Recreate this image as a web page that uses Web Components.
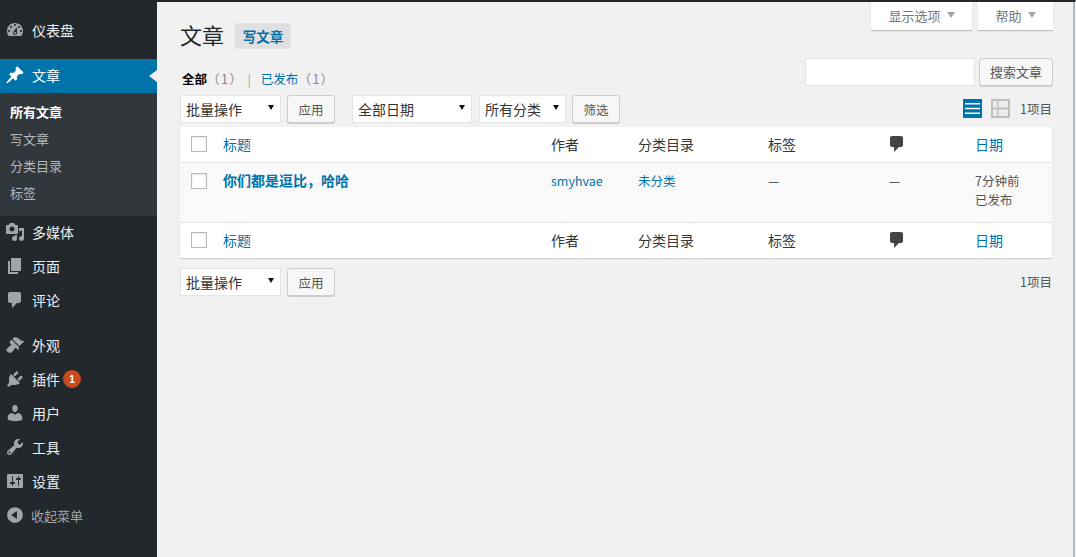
<!DOCTYPE html>
<html lang="zh">
<head>
<meta charset="utf-8">
<title>文章</title>
<style>
html, body { margin: 0; height: 100%; overflow: hidden; }
body {
  background: #f1f1f1;
  color: #444;
  font-family: "Noto Sans CJK SC", "Liberation Sans", sans-serif;
  font-size: 13px;
}
</style>
</head>
<body>
<wp-admin>
  <wp-sidebar slot="sidebar">
    <wp-menu-item icon="dashboard">仪表盘</wp-menu-item>
    <wp-menu-sep></wp-menu-sep>
    <wp-menu-item icon="post" active>文章</wp-menu-item>
    <wp-submenu>
      <a class="current">所有文章</a>
      <a>写文章</a>
      <a>分类目录</a>
      <a>标签</a>
    </wp-submenu>
    <wp-menu-item icon="media">多媒体</wp-menu-item>
    <wp-menu-item icon="page">页面</wp-menu-item>
    <wp-menu-item icon="comments">评论</wp-menu-item>
    <wp-menu-sep></wp-menu-sep>
    <wp-menu-item icon="appearance">外观</wp-menu-item>
    <wp-menu-item icon="plugins" badge="1">插件</wp-menu-item>
    <wp-menu-item icon="users">用户</wp-menu-item>
    <wp-menu-item icon="tools">工具</wp-menu-item>
    <wp-menu-item icon="settings">设置</wp-menu-item>
    <wp-menu-item icon="collapse" muted>收起菜单</wp-menu-item>
  </wp-sidebar>
  <wp-posts-page></wp-posts-page>
</wp-admin>

<script>
// dashicons, 20x20 box
const ICONS = {
  dashboard: 'M3.76 16h12.48c1.1-1.37 1.76-3.11 1.76-5 0-4.42-3.58-8-8-8s-8 3.58-8 8c0 1.89.66 3.63 1.76 5zM10 4c.55 0 1 .45 1 1s-.45 1-1 1-1-.45-1-1 .45-1 1-1zM6 6c.55 0 1 .45 1 1s-.45 1-1 1-1-.45-1-1 .45-1 1-1zm8 0c.55 0 1 .45 1 1s-.45 1-1 1-1-.45-1-1 .45-1 1-1zm-5.37 5.55L12 7v6c0 1.1-.9 2-2 2s-2-.9-2-2c0-.57.24-1.08.63-1.45zM4 10c.55 0 1 .45 1 1s-.45 1-1 1-1-.45-1-1 .45-1 1-1zm12 0c.55 0 1 .45 1 1s-.45 1-1 1-1-.45-1-1 .45-1 1-1zm-5 3c0-.55-.45-1-1-1s-1 .45-1 1 .45 1 1 1 1-.45 1-1z',
  post: 'M10.44 3.02l1.82-1.82 6.36 6.35-1.83 1.82c-1.05-.68-2.48-.57-3.41.36l-.75.75c-.92.93-1.04 2.35-.35 3.41l-1.83 1.82-2.41-2.41-2.8 2.79c-.42.42-3.38 2.71-3.8 2.29s1.86-3.39 2.28-3.81l2.79-2.79L4.1 9.36l1.83-1.82c1.05.69 2.48.57 3.4-.36l.75-.75c.93-.92 1.05-2.35.36-3.41z',
  media: 'M13 11V4c0-.55-.45-1-1-1h-1.67L9 1H5L3.67 3H2c-.55 0-1 .45-1 1v7c0 .55.45 1 1 1h10c.55 0 1-.45 1-1zM7 4.5c1.38 0 2.5 1.12 2.5 2.5S8.38 9.5 7 9.5 4.5 8.38 4.5 7 5.62 4.5 7 4.5zM14 6h5v10.5c0 1.38-1.12 2.5-2.5 2.5S14 17.88 14 16.5s1.12-2.5 2.5-2.5c.17 0 .34.02.5.05V9h-3V6zm-4 8.05V13h2v3.5c0 1.38-1.12 2.5-2.5 2.5S7 17.88 7 16.5 8.12 14 9.5 14c.17 0 .34.02.5.05z',
  page: 'M6 15V2h10v13H6zm-1 1h8v2H3V5h2v11z',
  comments: 'M5 2h9c1.1 0 2 .9 2 2v7c0 1.1-.9 2-2 2h-2l-5 5v-5H5c-1.1 0-2-.9-2-2V4c0-1.1.9-2 2-2z',
  appearance: 'M14.48 11.06L7.41 3.99l1.5-1.5c.5-.56 2.3-.47 3.51.32 1.21.8 1.43 1.28 2.91 2.1 1.18.64 2.45 1.26 4.45.85zm-.71.71L6.7 4.7 4.93 6.47c-.39.39-.39 1.02 0 1.41l1.06 1.06c.39.39.39 1.03 0 1.42-.6.6-1.43 1.11-2.21 1.69-.35.26-.7.53-1.01.84C1.43 13.23.78 15.08 2.53 16.83c1.75 1.75 3.6 1.1 4.94-.24.31-.31.58-.66.84-1.01.58-.78 1.09-1.61 1.69-2.21.39-.39 1.03-.39 1.42 0l1.06 1.06c.39.39 1.02.39 1.41 0z',
  plugins: 'M13.11 4.36L9.87 7.6 8 5.73l3.24-3.24c.35-.34 1.05-.2 1.56.32.52.51.66 1.21.31 1.55zm-8 1.77l.91-1.12 9.01 9.01-1.19.84c-.71.71-2.63 1.16-3.82 1.16H6.14L4.9 17.26c-.59.59-1.54.59-2.12 0-.59-.58-.59-1.53 0-2.12l1.24-1.24v-3.88c0-1.13.4-3.19 1.09-3.89zm7.26 3.97l3.24-3.24c.34-.35 1.04-.21 1.55.31.52.51.66 1.21.31 1.55l-3.24 3.25z',
  users: 'M10 9.25c-2.27 0-2.73-3.44-2.73-3.44C7 4.02 7.82 2 9.97 2c2.16 0 2.98 2.02 2.71 3.81 0 0-.41 3.44-2.68 3.44zm0 2.57L12.72 10c2.39 0 4.52 2.33 4.52 4.53v2.49s-3.65 1.13-7.24 1.13c-3.65 0-7.24-1.13-7.24-1.13v-2.49c0-2.25 1.94-4.48 4.47-4.48z',
  tools: 'M16.68 9.77c-1.34 1.34-3.3 1.67-4.95.99l-5.41 6.52c-.99.99-2.59.99-3.58 0s-.99-2.59 0-3.57l6.52-5.42c-.68-1.65-.35-3.61.99-4.95 1.28-1.28 3.12-1.62 4.72-1.06l-2.89 2.89 2.82 2.82 2.86-2.87c.53 1.58.18 3.39-1.08 4.65zM3.81 16.21c.4.39 1.04.39 1.43 0 .4-.4.4-1.04 0-1.43-.39-.4-1.03-.4-1.43 0-.39.39-.39 1.03 0 1.43z',
  settings: 'M18 16V4c0-.55-.45-1-1-1H3c-.55 0-1 .45-1 1v12c0 .55.45 1 1 1h14c.55 0 1-.45 1-1zM8 11h1c.55 0 1 .45 1 1s-.45 1-1 1H8v1.5c0 .28-.22.5-.5.5s-.5-.22-.5-.5V13H6c-.55 0-1-.45-1-1s.45-1 1-1h1V5.5c0-.28.22-.5.5-.5s.5.22.5.5V11zm5-2h-1c-.55 0-1-.45-1-1s.45-1 1-1h1V5.5c0-.28.22-.5.5-.5s.5.22.5.5V7h1c.55 0 1 .45 1 1s-.45 1-1 1h-1v5.5c0 .28-.22.5-.5.5s-.5-.22-.5-.5V9z',
  collapse: 'M10 2.16c4.33 0 7.84 3.51 7.84 7.84s-3.51 7.84-7.84 7.84S2.16 14.33 2.16 10 5.71 2.16 10 2.16zm2 11.72V6.12L6.18 9.97z'
};

function iconSvg(name, size, color) {
  return `<svg width="${size}" height="${size}" viewBox="0 0 20 20" fill="${color}"><path d="${ICONS[name]}"/></svg>`;
}

function shadow(el, html) {
  el.attachShadow({ mode: 'open' }).innerHTML = html;
}

class WpAdmin extends HTMLElement {
  constructor() {
    super();
    shadow(this, `<style>
      :host { display: flex; height: 557px; box-sizing: border-box; border-top: 2px solid #23282d; border-right: 1px solid #f4f6f8; }
      .content { flex: 1; min-width: 0; display: flex; border-right: 2px solid #a9bccd; }
    </style>
    <slot name="sidebar"></slot>
    <div class="content"><slot></slot></div>`);
  }
}

class WpSidebar extends HTMLElement {
  constructor() {
    super();
    shadow(this, `<style>
      :host { display: block; flex: none; width: 157px; box-sizing: border-box; padding-top: 12px; background: #23282d; }
    </style><slot></slot>`);
  }
}

class WpMenuSep extends HTMLElement {
  constructor() {
    super();
    shadow(this, `<style>:host { display: block; height: 11px; }</style>`);
  }
}

class WpMenuItem extends HTMLElement {
  constructor() {
    super();
    const name = this.getAttribute('icon');
    const active = this.hasAttribute('active');
    const muted = this.hasAttribute('muted');
    const badge = this.getAttribute('badge');
    const color = active ? '#fff' : '#a0a5aa';
    shadow(this, `<style>
      :host { display: flex; align-items: center; position: relative; box-sizing: border-box; height: 34px; padding: 0 0 2px 5px;
        color: ${muted ? '#a0a5aa' : '#eee'}; font-size: ${muted ? 13 : 14}px; background: ${active ? '#0073aa' : 'transparent'}; }
      :host([active]) { color: #fff; }
      svg { display: block; flex: none; margin-right: ${muted ? 6 : 7}px; }
      .badge { display: inline-flex; align-items: center; justify-content: center; width: 18px; height: 18px; margin-left: 3px;
        border-radius: 50%; background: #ca4a1f; color: #fff; font-size: 10px; font-weight: 700; font-family: "Liberation Sans", sans-serif; }
      .arrow { position: absolute; right: 0; top: 11px; border: 6px solid transparent; border-right-color: #f1f1f1; border-left-width: 0; border-right-width: 8px; }
    </style>
    ${iconSvg(name, 20, color)}<slot></slot>
    ${badge ? `<span class="badge">${badge}</span>` : ''}
    ${active ? '<span class="arrow"></span>' : ''}`);
  }
}

class WpSubmenu extends HTMLElement {
  constructor() {
    super();
    shadow(this, `<style>
      :host { display: flex; flex-direction: column; height: 123px; box-sizing: border-box; padding: 5px 0 0 10px; background: #32373c; }
      ::slotted(a) { display: block; height: 27px; line-height: 27px; font-size: 13px; color: #b4b9be; }
      ::slotted(a.current) { color: #fff; font-weight: 700; }
    </style><slot></slot>`);
  }
}

class WpButton extends HTMLElement {
  constructor() {
    super();
    shadow(this, `<style>
      :host { display: inline-flex; align-items: center; justify-content: center; box-sizing: border-box; height: 28px;
        background: #f7f7f7; border: 1px solid #ccc; border-radius: 3px; box-shadow: 0 1px 0 #ccc; color: #555; font-size: 12.5px; }
    </style><slot></slot>`);
  }
}

class WpSelect extends HTMLElement {
  constructor() {
    super();
    const label = this.getAttribute('label');
    shadow(this, `<style>
      :host { display: inline-block; position: relative; box-sizing: border-box; height: 28px; }
      select { appearance: none; -webkit-appearance: none; display: block; box-sizing: border-box; width: 100%; height: 100%; margin: 0;
        padding: 0 0 0 5px; background: #fff; border: 1px solid #e4e4e4; border-radius: 0; font: inherit; font-size: 14px; color: #333; }
      .caret { position: absolute; right: 7px; top: 10px; border: 3px solid transparent; border-top: 5px solid #111; border-bottom: 0; pointer-events: none; }
    </style>
    <select><option>${label}</option></select><span class="caret"></span>`);
  }
}

class WpCheckbox extends HTMLElement {
  constructor() {
    super();
    shadow(this, `<style>
      :host { display: block; box-sizing: border-box; width: 16px; height: 16px; background: #fff; border: 1px solid #b4b9be; box-shadow: inset 0 1px 2px rgba(0,0,0,.1); }
    </style>`);
  }
}

class WpScreenTab extends HTMLElement {
  constructor() {
    super();
    shadow(this, `<style>
      :host { display: flex; align-items: center; justify-content: center; gap: 6px; box-sizing: border-box; height: 28px; padding-bottom: 2px;
        background: #fff; box-shadow: 0 1px 1px rgba(0,0,0,.2); color: #72777c; font-size: 13px; }
      i { border: 4px solid transparent; border-top: 6px solid #a0a5aa; border-bottom: 0; margin-top: -1px; }
    </style><slot></slot><i></i>`);
  }
}

class WpPostsTable extends HTMLElement {
  constructor() {
    super();
    const bubble = iconSvg('comments', 20, '#444');
    const head = () => `<div class="row head">
        <span class="cb"><wp-checkbox></wp-checkbox></span>
        <a>标题</a><span>作者</span><span>分类目录</span><span>标签</span>
        <span class="bubble">${bubble}</span><a>日期</a>
      </div>`;
    shadow(this, `<style>
      :host { display: block; background: #fff; box-shadow: 0 1px 1px rgba(0,0,0,.15); }
      .row { display: grid; grid-template-columns: 43px 328px 87px 130px 121px 86px 1fr; font-size: 14px; color: #32373c; }
      .head { height: 35px; box-sizing: border-box; padding-bottom: 1px; align-items: center; }
      .head a { color: #0073aa; }
      .cb { padding-left: 11px; }
      .bubble { margin-left: -2px; height: 20px; }
      .bubble svg { display: block; }
      .post { height: 61px; box-sizing: border-box; background: #f9f9f9; border-top: 1px solid #e5e5e5; border-bottom: 1px solid #e1e1e1; padding-top: 8px; font-size: 12.5px; line-height: 19px; }
      .post .cb { padding-top: 2px; }
      .post a { color: #0073aa; }
      .post .title { font-size: 14px; font-weight: 700; }
      .post .date { color: #555; }
    </style>
    ${head()}
    <div class="row post">
      <span class="cb"><wp-checkbox></wp-checkbox></span>
      <a class="title">你们都是逗比，哈哈</a>
      <a>smyhvae</a>
      <a>未分类</a>
      <span>—</span>
      <span>—</span>
      <span class="date">7分钟前<br>已发布</span>
    </div>
    ${head()}`);
  }
}

class WpPostsPage extends HTMLElement {
  constructor() {
    super();
    const listIcon = `<svg width="19" height="19" viewBox="0 0 19 19"><rect width="19" height="19" fill="#0073aa"/><path d="M2 4.75h15M2 9.5h15M2 14.25h15" stroke="#fff" stroke-width="1.5"/></svg>`;
    const excerptIcon = `<svg width="19" height="19" viewBox="0 0 19 19"><rect width="19" height="19" fill="#bdbfc1"/><path d="M2 2h4v6.5H2zM2 10.5h4V17H2zM7.5 2H17v6.5H7.5zM7.5 10.5H17V17H7.5z" fill="#ececec"/></svg>`;
    shadow(this, `<style>
      :host { display: block; flex: 1; min-width: 0; box-sizing: border-box; padding: 0 21px 0 23px; color: #444; }
      a { color: #0073aa; }
      .top { display: flex; justify-content: space-between; align-items: flex-start; height: 56px; }
      .title { display: flex; align-items: flex-start; gap: 11px; padding-top: 21px; }
      h1 { margin: 0; font-size: 22px; font-weight: 400; color: #23282d; line-height: 22px; }
      .add { display: flex; align-items: center; justify-content: center; width: 56px; height: 26px; background: #e0e0e0; border-radius: 2px; color: #0073aa; font-size: 13.5px; font-weight: 700; }
      .tabs { display: flex; gap: 6px; margin-right: -1px; }
      .tabs wp-screen-tab:first-child { width: 101px; }
      .tabs wp-screen-tab:last-child { width: 75px; }
      .filter { display: flex; justify-content: space-between; height: 37px; }
      .views { margin: 12px 0 0 2px; font-size: 12.5px; color: #888; line-height: 18px; }
      .views b { color: #000; }
      .views i { font-style: normal; color: #a0a5aa; margin: 0 10px 0 4px; }
      .views span { letter-spacing: 1.5px; }
      .search { display: flex; gap: 4px; }
      .search input { display: block; box-sizing: border-box; width: 170px; height: 28px; border: 1px solid #e4e4e4; background: #fff; margin: 0; padding: 0; }
      .search wp-button { width: 74px; margin-right: -1px; padding-bottom: 1px; font-size: 13px; }
      .nav { display: flex; align-items: flex-start; height: 32px; }
      .count { margin-left: 10px; font-size: 12.5px; color: #555; line-height: 28px; }
      .spacer { flex: 1; }
      .modes { display: flex; gap: 9px; padding-top: 4px; }
      .modes svg { display: block; }
      .bottom { margin-top: 10px; }
    </style>
    <div class="top">
      <div class="title"><h1>文章</h1><a class="add">写文章</a></div>
      <div class="tabs"><wp-screen-tab>显示选项</wp-screen-tab><wp-screen-tab>帮助</wp-screen-tab></div>
    </div>
    <div class="filter">
      <div class="views"><b>全部</b><span>（1）</span><i>|</i><a>已发布</a><span>（1）</span></div>
      <div class="search"><input type="search" aria-label="搜索文章"><wp-button>搜索文章</wp-button></div>
    </div>
    <div class="nav">
      <wp-select label="批量操作" style="width:101px"></wp-select>
      <wp-button style="width:48px;margin-left:6px">应用</wp-button>
      <wp-select label="全部日期" style="width:120px;margin-left:17px"></wp-select>
      <wp-select label="所有分类" style="width:87px;margin-left:7px"></wp-select>
      <wp-button style="width:48px;margin-left:6px">筛选</wp-button>
      <span class="spacer"></span>
      <div class="modes">${listIcon}${excerptIcon}</div>
      <span class="count">1项目</span>
    </div>
    <wp-posts-table></wp-posts-table>
    <div class="nav bottom">
      <wp-select label="批量操作" style="width:101px"></wp-select>
      <wp-button style="width:48px;margin-left:6px">应用</wp-button>
      <span class="spacer"></span>
      <span class="count">1项目</span>
    </div>`);
  }
}

customElements.define('wp-admin', WpAdmin);
customElements.define('wp-sidebar', WpSidebar);
customElements.define('wp-menu-sep', WpMenuSep);
customElements.define('wp-menu-item', WpMenuItem);
customElements.define('wp-submenu', WpSubmenu);
customElements.define('wp-button', WpButton);
customElements.define('wp-select', WpSelect);
customElements.define('wp-checkbox', WpCheckbox);
customElements.define('wp-screen-tab', WpScreenTab);
customElements.define('wp-posts-table', WpPostsTable);
customElements.define('wp-posts-page', WpPostsPage);
</script>
</body>
</html>
